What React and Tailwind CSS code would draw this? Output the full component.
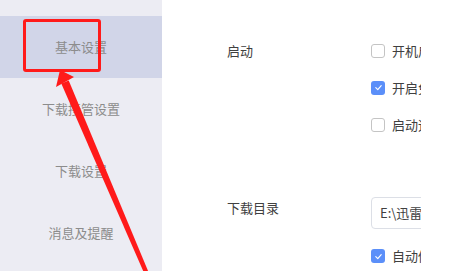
const font = { fontFamily: '"Noto Sans CJK SC", "Noto Sans", sans-serif' };

function Checkbox({ checked }) {
  if (checked) {
    return (
      <span className="w-[14px] h-[14px] rounded-[3px] bg-[#5b8ff9] flex items-center justify-center shrink-0">
        <svg width="9" height="9" viewBox="0 0 10 10" fill="none">
          <path d="M2 5.2 L4.2 7.3 L8 3" stroke="#fff" strokeWidth="1.3" strokeLinecap="round" strokeLinejoin="round" />
        </svg>
      </span>
    );
  }
  return <span className="w-[14px] h-[14px] rounded-[3px] border border-[#c4c4c4] bg-white shrink-0" />;
}

function Option({ checked, label }) {
  return (
    <div className="h-[37px] flex items-center gap-[7px] whitespace-nowrap">
      <Checkbox checked={checked} />
      <span className="text-[13px] text-[#404040] leading-[20px]">{label}</span>
    </div>
  );
}

const menu = ["基本设置", "下载接管设置", "下载设置", "消息及提醒"];

export default function App() {
  return (
    <div className="relative w-[453px] h-[271px] overflow-hidden bg-white flex" style={font}>
      {/* sidebar */}
      <div className="w-[162px] h-full bg-[#ececf3] pt-[16px] flex flex-col">
        {menu.map((m, i) => (
          <div
            key={m}
            className={`h-[62px] flex items-center justify-center text-[13px] text-[#8c8c8c] ${i === 0 ? "bg-[#d1d5e8]" : ""}`}
          >
            {m}
          </div>
        ))}
      </div>

      {/* content, clipped */}
      <div className="w-[259px] h-full overflow-hidden pl-[65px] pt-[32px]">
        <div className="flex">
          <div className="w-[144px] shrink-0 h-[37px] flex items-center text-[13px] text-[#404040]">启动</div>
          <div className="flex flex-col">
            <Option label="开机启动迅雷" />
            <Option checked label="开启免打扰模式" />
            <Option label="启动迅雷时自动开始任务" />
          </div>
        </div>

        <div className="flex mt-[54px]">
          <div className="w-[144px] shrink-0 pt-[1px] text-[13px] leading-[20px] text-[#404040]">下载目录</div>
          <div className="flex flex-col">
            <div className="w-[200px] h-[32px] rounded-[4px] border border-[#dcdfe6] flex items-center pl-[8px] text-[13px] text-[#404040] whitespace-nowrap">
              E:\迅雷下载
            </div>
            <div className="mt-[17px] h-[20px] flex items-center gap-[7px] whitespace-nowrap">
              <Checkbox checked />
              <span className="text-[13px] text-[#404040]">自动修改为上次使用的目录</span>
            </div>
          </div>
        </div>
      </div>

      <div className="flex-1 bg-white" />

      {/* annotation */}
      <div className="absolute left-[23px] top-[19px] w-[78px] h-[53px] border-[3px] border-[#ff1a1a] rounded-[3px]" />
      <svg className="absolute left-0 top-0" width="453" height="271" viewBox="0 0 453 271">
        <polygon points="60,70 74,77 56,87" fill="#ff1a1a" />
        <polygon points="61.3,83.6 68.7,80.4 148.5,272 144.5,274" fill="#ff1a1a" />
      </svg>
    </div>
  );
}
